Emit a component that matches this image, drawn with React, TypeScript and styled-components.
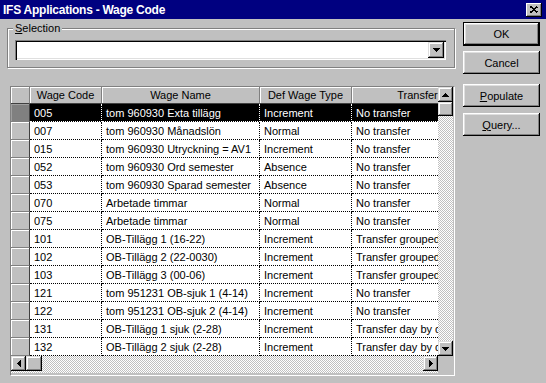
import React from "react";
import styled, { createGlobalStyle } from "styled-components";

const GlobalStyle = createGlobalStyle`
  html, body {
    margin: 0;
    padding: 0;
    background: #c0c0c0;
  }
  body {
    font-family: "Liberation Sans", Arial, sans-serif;
    font-size: 11px;
    color: #000;
  }
`;

const Window = styled.div`
  width: 546px;
  height: 383px;
  display: flex;
  flex-direction: column;
  background: #c0c0c0;
  overflow: hidden;
`;

const TitleBar = styled.div`
  height: 19px;
  flex-shrink: 0;
  display: flex;
  align-items: center;
  justify-content: space-between;
  padding: 0 4px 0 3px;
  background: #000080;
  color: #fff;
  font-size: 12px;
  font-weight: bold;
  letter-spacing: -0.25px;
`;

const CloseButton = styled.div`
  width: 16px;
  height: 14px;
  display: flex;
  align-items: center;
  justify-content: center;
  background: #c0c0c0;
  box-shadow: inset -1px -1px 0 #000, inset 1px 1px 0 #fff,
    inset -2px -2px 0 #808080;
`;

const Body = styled.div`
  display: flex;
  padding: 3px 0 0 7px;
`;

const LeftPane = styled.div`
  width: 449px;
  display: flex;
  flex-direction: column;
`;

const GroupBox = styled.fieldset`
  margin: 0;
  width: 448px;
  box-sizing: border-box;
  padding: 5px 8px 7px 7px;
  border: 1px solid #808080;
  box-shadow: inset 1px 1px 0 #fff, 1px 1px 0 #fff;
`;

const GroupLabel = styled.legend`
  padding: 0 2px;
  margin-left: -2px;
  line-height: 13px;
  background: #c0c0c0;
`;

const Combo = styled.div`
  height: 20px;
  box-sizing: border-box;
  display: flex;
  justify-content: flex-end;
  align-items: center;
  padding: 2px;
  background: #fff;
  box-shadow: inset 1px 1px 0 #808080, inset 2px 2px 0 #000,
    inset -1px -1px 0 #fff, inset -2px -2px 0 #dfdfdf;
`;

const ArrowButton = styled.div<{ $w: number; $h: number }>`
  width: ${(p) => p.$w}px;
  height: ${(p) => p.$h}px;
  flex-shrink: 0;
  box-sizing: border-box;
  display: flex;
  align-items: center;
  justify-content: center;
  background: #c0c0c0;
  box-shadow: inset -1px -1px 0 #000, inset 1px 1px 0 #dfdfdf,
    inset -2px -2px 0 #808080, inset 2px 2px 0 #fff;
`;

const GridFrame = styled.div`
  margin: 18px 0 0 3px;
  width: 445px;
  box-sizing: border-box;
  display: grid;
  grid-template-columns: 1fr 15px;
  grid-template-rows: auto 17px;
  padding: 0 1px 2px 0;
  border: 1px solid;
  border-color: #808080 #fff #fff #808080;
`;

const Viewport = styled.div`
  overflow: hidden;
  background: #fff;
`;

const HeaderRow = styled.div`
  display: flex;
  height: 17px;
  width: 473px;
`;

const HeaderCell = styled.div<{ $w: number }>`
  width: ${(p) => p.$w}px;
  flex-shrink: 0;
  box-sizing: border-box;
  display: flex;
  align-items: center;
  justify-content: center;
  background: #c0c0c0;
  border-right: 1px solid #808080;
  border-bottom: 1px solid #404040;
  box-shadow: inset 1px 1px 0 #fff;
  white-space: nowrap;
`;

const DataRow = styled.div<{ $selected?: boolean }>`
  display: flex;
  height: 18px;
  width: 473px;
  background: ${(p) => (p.$selected ? "#000" : "#fff")};
  color: ${(p) => (p.$selected ? "#fff" : "#000")};
`;

const Selector = styled.div<{ $active?: boolean }>`
  width: 19px;
  flex-shrink: 0;
  box-sizing: border-box;
  background: ${(p) => (p.$active ? "#808080" : "#c0c0c0")};
  border-right: 1px solid #404040;
  border-bottom: 1px solid #808080;
  box-shadow: inset 1px 1px 0 ${(p) => (p.$active ? "#a0a0a0" : "#fff")};
`;

const Cell = styled.div<{ $w: number; $selected?: boolean }>`
  width: ${(p) => p.$w}px;
  flex-shrink: 0;
  box-sizing: border-box;
  display: flex;
  align-items: center;
  padding-left: 4px;
  overflow: hidden;
  white-space: nowrap;
  border-right: 1px dotted ${(p) => (p.$selected ? "#fff" : "#000")};
  border-bottom: 1px dotted ${(p) => (p.$selected ? "#fff" : "#000")};
`;

const checker = `
  background-color: #fff;
  background-image: conic-gradient(
    #c0c0c0 25%,
    transparent 0 50%,
    #c0c0c0 0 75%,
    transparent 0
  );
  background-size: 2px 2px;
`;

const VScroll = styled.div`
  display: flex;
  flex-direction: column;
  ${checker}
`;

const HScroll = styled.div`
  display: flex;
  ${checker}
`;

const Track = styled.div`
  flex: 1;
`;

const Thumb = styled.div<{ $w: number; $h: number }>`
  width: ${(p) => p.$w}px;
  height: ${(p) => p.$h}px;
  flex-shrink: 0;
  background: #c0c0c0;
  box-shadow: inset -1px -1px 0 #000, inset 1px 1px 0 #dfdfdf,
    inset -2px -2px 0 #808080, inset 2px 2px 0 #fff;
`;

const Corner = styled.div`
  background: #c0c0c0;
`;

const ButtonColumn = styled.div`
  display: flex;
  flex-direction: column;
  margin-left: 7px;
`;

const PushButton = styled.div<{ $default?: boolean; $gap: number }>`
  width: 77px;
  height: ${(p) => (p.$default ? 24 : 23)}px;
  margin-top: ${(p) => p.$gap}px;
  box-sizing: border-box;
  display: flex;
  align-items: center;
  justify-content: center;
  background: #c0c0c0;
  border: ${(p) => (p.$default ? "1px solid #000" : "none")};
  box-shadow: inset -1px -1px 0 #000, inset 1px 1px 0 #fff,
    inset -2px -2px 0 #808080, inset 2px 2px 0 #dfdfdf;
`;

type Dir = "up" | "down" | "left" | "right";

function Arrow({ dir }: { dir: Dir }) {
  const pts: Record<Dir, string> = {
    up: "0,4 7,4 3.5,0",
    down: "0,0 7,0 3.5,4",
    left: "4,0 4,7 0,3.5",
    right: "0,0 0,7 4,3.5",
  };
  const vertical = dir === "up" || dir === "down";
  return (
    <svg
      width={vertical ? 7 : 4}
      height={vertical ? 4 : 7}
      shapeRendering="crispEdges"
    >
      <polygon points={pts[dir]} fill="#000" />
    </svg>
  );
}

const columns = [
  { title: "Wage Code", w: 72 },
  { title: "Wage Name", w: 158 },
  { title: "Def Wage Type", w: 92 },
  { title: "Transfer", w: 132 },
];

const rows = [
  ["005", "tom 960930 Exta tillägg", "Increment", "No transfer"],
  ["007", "tom 960930 Månadslön", "Normal", "No transfer"],
  ["015", "tom 960930 Utryckning = AV1", "Increment", "No transfer"],
  ["052", "tom 960930 Ord semester", "Absence", "No transfer"],
  ["053", "tom 960930 Sparad semester", "Absence", "No transfer"],
  ["070", "Arbetade timmar", "Normal", "No transfer"],
  ["075", "Arbetade timmar", "Normal", "No transfer"],
  ["101", "OB-Tillägg 1 (16-22)", "Increment", "Transfer grouped"],
  ["102", "OB-Tillägg 2 (22-0030)", "Increment", "Transfer grouped"],
  ["103", "OB-Tillägg 3 (00-06)", "Increment", "Transfer grouped"],
  ["121", "tom 951231 OB-sjuk 1 (4-14)", "Increment", "No transfer"],
  ["122", "tom 951231 OB-sjuk 2 (4-14)", "Increment", "No transfer"],
  ["131", "OB-Tillägg 1 sjuk (2-28)", "Increment", "Transfer day by day"],
  ["132", "OB-Tillägg 2 sjuk (2-28)", "Increment", "Transfer day by day"],
];

export default function App() {
  const selected = 0;

  return (
    <>
      <GlobalStyle />
      <Window>
        <TitleBar>
          <span>IFS Applications - Wage Code</span>
          <CloseButton>
            <svg width="8" height="7" shapeRendering="crispEdges">
              <path d="M0.5 0.5 L7.5 6.5 M7.5 0.5 L0.5 6.5" stroke="#000" strokeWidth="1.6" />
            </svg>
          </CloseButton>
        </TitleBar>

        <Body>
          <LeftPane>
            <GroupBox>
              <GroupLabel>
                <u>S</u>election
              </GroupLabel>
              <Combo>
                <ArrowButton $w={16} $h={16}>
                  <Arrow dir="down" />
                </ArrowButton>
              </Combo>
            </GroupBox>

            <GridFrame>
              <Viewport>
                <HeaderRow>
                  <HeaderCell $w={19} />
                  {columns.map((c) => (
                    <HeaderCell key={c.title} $w={c.w}>
                      {c.title}
                    </HeaderCell>
                  ))}
                </HeaderRow>
                {rows.map((r, i) => (
                  <DataRow key={r[0]} $selected={i === selected}>
                    <Selector $active={i === selected} />
                    {r.map((v, j) => (
                      <Cell key={j} $w={columns[j].w} $selected={i === selected}>
                        {v}
                      </Cell>
                    ))}
                  </DataRow>
                ))}
              </Viewport>

              <VScroll>
                <ArrowButton $w={15} $h={15}>
                  <Arrow dir="up" />
                </ArrowButton>
                <Thumb $w={15} $h={14} />
                <Track />
                <ArrowButton $w={15} $h={15}>
                  <Arrow dir="down" />
                </ArrowButton>
              </VScroll>

              <HScroll>
                <ArrowButton $w={15} $h={15}>
                  <Arrow dir="left" />
                </ArrowButton>
                <Thumb $w={16} $h={15} />
                <Track />
                <ArrowButton $w={15} $h={15}>
                  <Arrow dir="right" />
                </ArrowButton>
              </HScroll>
              <Corner />
            </GridFrame>
          </LeftPane>

          <ButtonColumn>
            <PushButton $default $gap={0}>OK</PushButton>
            <PushButton $gap={5}>Cancel</PushButton>
            <PushButton $gap={10}>
              <span>
                <u>P</u>opulate
              </span>
            </PushButton>
            <PushButton $gap={6}>
              <span>
                <u>Q</u>uery...
              </span>
            </PushButton>
          </ButtonColumn>
        </Body>
      </Window>
    </>
  );
}
